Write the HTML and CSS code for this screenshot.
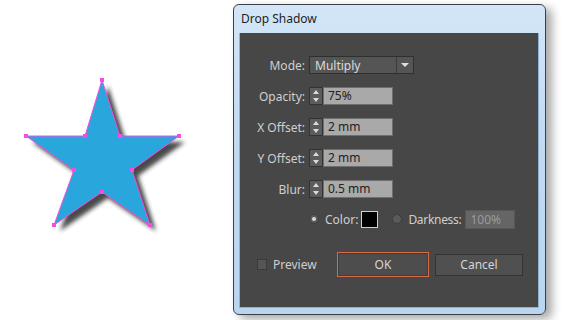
FILE: index.html
```html
<!DOCTYPE html>
<html lang="en">
<head>
  <meta charset="UTF-8" />
  <title>Drop Shadow</title>
  <link rel="stylesheet" href="styles.css">
</head>
<body>
  <div class="page">
    <svg class="star" width="233" height="320" viewBox="0 0 233 320">
      <defs>
        <filter id="soft" x="-20%" y="-20%" width="140%" height="140%">
          <feGaussianBlur stdDeviation="2.2" />
        </filter>
      </defs>
      <polygon transform="translate(6 6)" filter="url(#soft)" fill="#2a2a2a" opacity="0.85"
        points="102,80 120,136 179,136 132,170 150,225 102,192 54,225 74,170 26,136 85,136" />
      <polygon fill="#29a6dc" stroke="#f44de0" stroke-width="1"
        points="102,80 120,136 179,136 132,170 150,225 102,192 54,225 74,170 26,136 85,136" />
      <g fill="#f44de0">
        <rect x="100" y="78" width="4" height="4" />
        <rect x="118" y="134" width="4" height="4" />
        <rect x="177" y="134" width="4" height="4" />
        <rect x="130" y="168" width="4" height="4" />
        <rect x="148" y="223" width="4" height="4" />
        <rect x="100" y="190" width="4" height="4" />
        <rect x="52" y="223" width="4" height="4" />
        <rect x="72" y="168" width="4" height="4" />
        <rect x="24" y="134" width="4" height="4" />
        <rect x="83" y="134" width="4" height="4" />
      </g>
    </svg>

    <div class="dialog">
      <div class="titlebar">Drop Shadow</div>
      <div class="panel">
        <div class="fields">
          <label class="label">Mode:</label>
          <div class="select">
            <span class="select-text">Multiply</span>
            <span class="select-arrow"></span>
          </div>

          <label class="label">Opacity:</label>
          <div class="spin"><span class="spin-btn"></span><span class="spin-field">75%</span></div>

          <label class="label">X Offset:</label>
          <div class="spin"><span class="spin-btn"></span><span class="spin-field">2 mm</span></div>

          <label class="label">Y Offset:</label>
          <div class="spin"><span class="spin-btn"></span><span class="spin-field">2 mm</span></div>

          <label class="label">Blur:</label>
          <div class="spin"><span class="spin-btn"></span><span class="spin-field">0.5 mm</span></div>
        </div>

        <div class="color-row">
          <span class="radio checked"></span>
          <span class="label">Color:</span>
          <span class="swatch"></span>
          <span class="radio"></span>
          <span class="label label-tight">Darkness:</span>
          <span class="dim-field">100%</span>
        </div>

        <div class="buttons">
          <div class="preview">
            <span class="checkbox"></span>
            <span class="label">Preview</span>
          </div>
          <button class="btn btn-ok">OK</button>
          <button class="btn btn-cancel">Cancel</button>
        </div>
      </div>
    </div>
  </div>
</body>
</html>
```

FILE: styles.css
```css
html, body {
  margin: 0;
  padding: 0;
  background: #ffffff;
  font-family: "Noto Sans", "Open Sans", sans-serif;
}
.page {
  display: flex;
  align-items: flex-start;
  width: 570px;
  height: 320px;
  overflow: hidden;
}
.star {
  display: block;
  flex: none;
}
.dialog {
  margin-top: 4px;
  width: 313px;
  height: 311px;
  box-sizing: border-box;
  border: 1px solid #3c4046;
  border-radius: 6px;
  background: linear-gradient(180deg, #d3e6f8 0%, #c2dbf3 40%, #b9d5f0 100%);
  box-shadow: 6px 4px 10px rgba(0, 0, 0, 0.35);
  padding: 0 6px 6px 5px;
  display: flex;
  flex-direction: column;
}
.titlebar {
  height: 28px;
  line-height: 27px;
  padding-left: 2px;
  font-size: 12px;
  color: #1e1e1e;
}
.panel {
  flex: 1;
  background: #474747;
  border: 1px solid #8fb0d0;
  border-top: none;
  padding: 23px 0 0 0;
  box-sizing: border-box;
  display: flex;
  flex-direction: column;
}
.label {
  font-size: 12px;
  color: #cfcfcf;
  white-space: nowrap;
}
.label-tight {
  letter-spacing: -0.3px;
}
.fields {
  display: grid;
  grid-template-columns: 65px auto;
  justify-content: start;
  row-gap: 13px;
  column-gap: 4px;
  align-items: center;
}
.fields .label {
  text-align: right;
}
.select {
  width: 105px;
  height: 18px;
  box-sizing: border-box;
  background: #555555;
  border: 1px solid #2f2f2f;
  display: flex;
  align-items: center;
}
.select-text {
  flex: 1;
  padding-left: 5px;
  font-size: 12px;
  color: #dcdcdc;
}
.select-arrow {
  width: 16px;
  height: 100%;
  border-left: 1px solid #3a3a3a;
  position: relative;
}
.select-arrow::after {
  content: "";
  position: absolute;
  left: 4px;
  top: 6px;
  border-left: 4px solid transparent;
  border-right: 4px solid transparent;
  border-top: 4px solid #e0e0e0;
}
.spin {
  display: flex;
  height: 18px;
}
.spin-btn {
  width: 14px;
  box-sizing: border-box;
  background: #5c5c5c;
  border: 1px solid #333;
  position: relative;
}
.spin-btn::before,
.spin-btn::after {
  content: "";
  position: absolute;
  left: 3px;
  border-left: 3px solid transparent;
  border-right: 3px solid transparent;
}
.spin-btn::before {
  top: 2px;
  border-bottom: 4px solid #dcdcdc;
}
.spin-btn::after {
  bottom: 2px;
  border-top: 4px solid #dcdcdc;
}
.spin-field {
  width: 70px;
  box-sizing: border-box;
  background: #a9a9a9;
  border: 1px solid #6f6f6f;
  padding-left: 4px;
  font-size: 12px;
  line-height: 16px;
  color: #222;
}
.color-row {
  display: flex;
  align-items: center;
  margin-top: 11px;
  padding-left: 69px;
  height: 20px;
}
.radio {
  width: 10px;
  height: 10px;
  border-radius: 50%;
  background: #5a5a5a;
  border: 1px solid #3d3d3d;
  box-sizing: border-box;
  margin-right: 6px;
  position: relative;
}
.radio.checked::after {
  content: "";
  position: absolute;
  left: 2px;
  top: 2px;
  width: 4px;
  height: 4px;
  border-radius: 50%;
  background: #d8d8d8;
}
.swatch {
  width: 17px;
  height: 17px;
  box-sizing: border-box;
  background: #000;
  border: 1px solid #d0d0d0;
  margin: 0 14px 0 3px;
}
.dim-field {
  margin-left: 4px;
  width: 50px;
  height: 19px;
  box-sizing: border-box;
  background: #656565;
  border: 1px solid #575757;
  padding-left: 4px;
  font-size: 12px;
  line-height: 17px;
  color: #9a9a9a;
}
.buttons {
  display: flex;
  align-items: center;
  margin-top: 23px;
  padding-left: 17px;
}
.preview {
  display: flex;
  align-items: center;
  width: 80px;
}
.checkbox {
  width: 10px;
  height: 11px;
  box-sizing: border-box;
  background: #555;
  border: 1px solid #3a3a3a;
  margin-right: 6px;
}
.btn {
  font-family: inherit;
  font-size: 12px;
  color: #d6d6d6;
  background: #4d4d4d;
  border: 1px solid #333;
  padding: 0;
  box-sizing: border-box;
}
.btn-ok {
  width: 92px;
  height: 25px;
  border: 1px solid #d86b4a;
  box-shadow: inset 0 0 0 1px #3e3e3e;
}
.btn-cancel {
  width: 88px;
  height: 22px;
  margin-left: 6px;
  background: #505050;
}
```
